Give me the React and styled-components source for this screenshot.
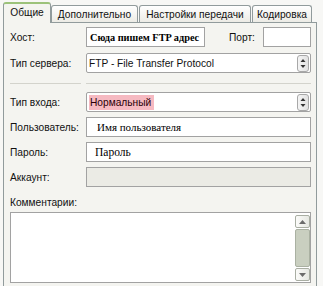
import React from "react";
import styled, { createGlobalStyle, css } from "styled-components";

const GlobalStyle = createGlobalStyle`
  html, body {
    margin: 0;
    padding: 0;
    background: #f7f7f5;
    overflow: hidden;
  }
  body {
    font-family: "Liberation Sans", Arial, sans-serif;
    font-size: 10.2px;
    color: #111;
  }
`;

const Window = styled.div`
  width: 323px;
  height: 286px;
  padding-top: 2px;
  box-sizing: border-box;
  overflow: hidden;
`;

const TabBar = styled.div`
  display: flex;
  align-items: flex-end;
  height: 20px;
  padding-left: 3px;
  position: relative;
  z-index: 2;
`;

const Tab = styled.div`
  box-sizing: border-box;
  width: ${(p) => p.$w}px;
  margin-left: ${(p) => p.$gap || 0}px;
  display: flex;
  align-items: center;
  justify-content: center;
  border: 1px solid #919b9c;
  border-radius: 3px 3px 0 0;
  white-space: nowrap;
  ${(p) =>
    p.$active
      ? css`
          height: 21px;
          margin-bottom: -1px;
          border-bottom: none;
          border-top: 2px solid #9cc27a;
          background: #f4f4f0;
          padding-bottom: 2px;
        `
      : css`
          height: 17px;
          border-bottom: none;
          background: linear-gradient(#ffffff, #ecebe5);
          padding-top: 1px;
        `}
`;

const Panel = styled.div`
  box-sizing: border-box;
  width: 314px;
  margin-left: 3px;
  border: 1px solid #919b9c;
  background: #f4f4f0;
  padding: 4px 5px 10px 6px;
  display: flex;
  flex-direction: column;
`;

const Row = styled.div`
  display: flex;
  align-items: center;
  height: 20px;
  margin-top: ${(p) => p.$mt || 0}px;
`;

const Label = styled.div`
  width: 76px;
  flex: none;
  white-space: nowrap;
`;

const PortLabel = styled.div`
  margin-left: 24px;
  white-space: nowrap;
`;

const Field = styled.div`
  box-sizing: border-box;
  height: 20px;
  ${(p) => (p.$w ? css`width: ${p.$w}px; flex: none;` : css`flex: 1;`)}
  ${(p) => p.$push && css`margin-left: auto;`}
  border: 1px solid #a2a2a2;
  background: ${(p) => (p.$disabled ? "#ebebe5" : "#ffffff")};
  display: flex;
  align-items: center;
  padding-left: ${(p) => p.$indent ?? 3}px;
  white-space: nowrap;
  overflow: hidden;
`;

const SerifText = styled.span`
  font-family: "Liberation Serif", "Times New Roman", serif;
  font-size: ${(p) => p.$size || 11}px;
  font-weight: ${(p) => (p.$bold ? 700 : 400)};
  color: #000;
`;

const Select = styled.div`
  box-sizing: border-box;
  flex: 1;
  height: 20px;
  border: 1px solid #a2a2a2;
  border-radius: 2px;
  background: #fff;
  display: flex;
  align-items: center;
  padding: 0 1px 0 2px;
`;

const SelectValue = styled.div`
  flex: 1;
  display: flex;
  align-items: center;
  height: 16px;
`;

const Highlight = styled.span`
  background: #f6b9c1;
  padding: 2px 3px 2px 1px;
  color: #2a0008;
`;

const ArrowButton = styled.div`
  box-sizing: border-box;
  width: 12px;
  height: 17px;
  border: 1px solid #a8a8a8;
  border-radius: 3px;
  background: linear-gradient(90deg, #f4f4f4, #e2e2e2);
  display: flex;
  align-items: center;
  justify-content: center;
`;

const Separator = styled.div`
  display: flex;
  gap: 5px;
  margin: 10px 0 8px;
  height: 1px;
`;

const SepLine = styled.div`
  height: 1px;
  background: #d3d3cc;
  ${(p) => (p.$w ? css`width: ${p.$w}px;` : css`flex: 1;`)}
`;

const CommentLabel = styled.div`
  margin-top: 9px;
  line-height: 13px;
  margin-bottom: 3px;
`;

const Memo = styled.div`
  box-sizing: border-box;
  height: 71px;
  border: 1px solid #a2a2a2;
  background: #fff;
  display: flex;
  justify-content: flex-end;
  padding: 2px 0 1px;
`;

const ScrollBar = styled.div`
  width: 15px;
  display: flex;
  flex-direction: column;
`;

const ScrollBtn = styled.div`
  box-sizing: border-box;
  height: 13px;
  border: 1px solid #a9aea3;
  border-radius: 2px;
  background: linear-gradient(90deg, #fbfbf9, #e6e8e2);
  display: flex;
  align-items: center;
  justify-content: center;
`;

const Thumb = styled.div`
  flex: 1;
  box-sizing: border-box;
  border: 1px solid #aab1a2;
  border-radius: 2px;
  background: #c9cfc0;
  margin: 1px 0;
`;

const UpDown = () => (
  <svg width="6" height="11" viewBox="0 0 6 11">
    <path d="M3 1 L5.5 4 L0.5 4 Z" fill="#333" />
    <path d="M3 10 L5.5 7 L0.5 7 Z" fill="#333" />
  </svg>
);

const Tri = ({ down }) => (
  <svg width="7" height="4" viewBox="0 0 7 4">
    <path d={down ? "M0 0 L7 0 L3.5 4 Z" : "M0 4 L7 4 L3.5 0 Z"} fill="#6b6b6b" />
  </svg>
);

const tabs = [
  { title: "Общие", w: 48, active: true },
  { title: "Дополнительно", w: 87 },
  { title: "Настройки передачи", w: 112, gap: 1 },
  { title: "Кодировка", w: 60, gap: 1 },
];

export default function App() {
  return (
    <>
      <GlobalStyle />
      <Window>
        <TabBar>
          {tabs.map((t) => (
            <Tab key={t.title} $w={t.w} $gap={t.gap} $active={t.active}>
              {t.title}
            </Tab>
          ))}
        </TabBar>
        <Panel>
          <Row>
            <Label>Хост:</Label>
            <Field $w={119} $indent={3}>
              <SerifText $bold $size={10.3}>Сюда пишем FTP адрес</SerifText>
            </Field>
            <PortLabel>Порт:</PortLabel>
            <Field $w={48} $push />
          </Row>
          <Row $mt={6}>
            <Label>Тип сервера:</Label>
            <Select>
              <SelectValue>FTP - File Transfer Protocol</SelectValue>
              <ArrowButton>
                <UpDown />
              </ArrowButton>
            </Select>
          </Row>
          <Separator>
            <SepLine $w={71} />
            <SepLine />
          </Separator>
          <Row>
            <Label>Тип входа:</Label>
            <Select>
              <SelectValue>
                <Highlight>Нормальный</Highlight>
              </SelectValue>
              <ArrowButton>
                <UpDown />
              </ArrowButton>
            </Select>
          </Row>
          <Row $mt={5}>
            <Label>Пользователь:</Label>
            <Field $indent={10}>
              <SerifText>Имя пользователя</SerifText>
            </Field>
          </Row>
          <Row $mt={5}>
            <Label>Пароль:</Label>
            <Field $indent={8}>
              <SerifText $size={11.5}>Пароль</SerifText>
            </Field>
          </Row>
          <Row $mt={5}>
            <Label>Аккаунт:</Label>
            <Field $disabled />
          </Row>
          <CommentLabel>Комментарии:</CommentLabel>
          <Memo>
            <ScrollBar>
              <ScrollBtn>
                <Tri />
              </ScrollBtn>
              <Thumb />
              <ScrollBtn>
                <Tri down />
              </ScrollBtn>
            </ScrollBar>
          </Memo>
        </Panel>
      </Window>
    </>
  );
}
